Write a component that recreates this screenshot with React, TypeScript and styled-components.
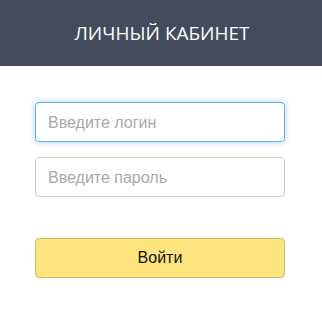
import styled, { createGlobalStyle } from "styled-components";

const GlobalStyle = createGlobalStyle`
  body {
    margin: 0;
    background: #ffffff;
    font-family: "Open Sans", "Liberation Sans", sans-serif;
  }
`;

export default function App() {
  return (
    <>
      <GlobalStyle />
      <S.Page>
        <S.Header>ЛИЧНЫЙ КАБИНЕТ</S.Header>
        <S.Form onSubmit={(e) => e.preventDefault()}>
          <S.Input type="text" placeholder="Введите логин" focused />
          <S.Input type="password" placeholder="Введите пароль" />
          <S.Button type="submit">Войти</S.Button>
        </S.Form>
      </S.Page>
    </>
  );
}

const S = {
  Page: styled.div`
    width: 322px;
    height: 314px;
    background: #ffffff;
  `,
  Header: styled.div`
    height: 66px;
    display: flex;
    align-items: center;
    justify-content: center;
    background-color: #434b5c;
    color: #ffffff;
    font-family: "Open Sans", sans-serif;
    font-size: 19px;
    padding-left: 2px;
    box-sizing: border-box;
  `,
  Form: styled.form`
    display: flex;
    flex-direction: column;
    padding: 36px 37px 0 35px;
  `,
  Input: styled.input<{ focused?: boolean }>`
    box-sizing: border-box;
    height: 40px;
    width: 250px;
    margin-bottom: 15px;
    padding: 1px 12px 0;
    border: 1px solid ${({ focused }) => (focused ? "#66afe9" : "#cccccc")};
    border-radius: 4px;
    box-shadow: ${({ focused }) =>
      focused ? "0 0 6px rgba(102, 175, 233, 0.6)" : "none"};
    font-family: "Liberation Sans", sans-serif;
    font-size: 16px;
    color: #333;
    outline: none;

    &::placeholder {
      color: #a9a9a9;
    }
  `,
  Button: styled.button`
    box-sizing: border-box;
    height: 40px;
    width: 250px;
    margin-top: 26px;
    border: 1px solid #cdb86a;
    border-radius: 4px;
    background-color: #fee47d;
    color: #111;
    font-family: "Liberation Sans", sans-serif;
    font-size: 16px;
    cursor: pointer;
  `,
};
